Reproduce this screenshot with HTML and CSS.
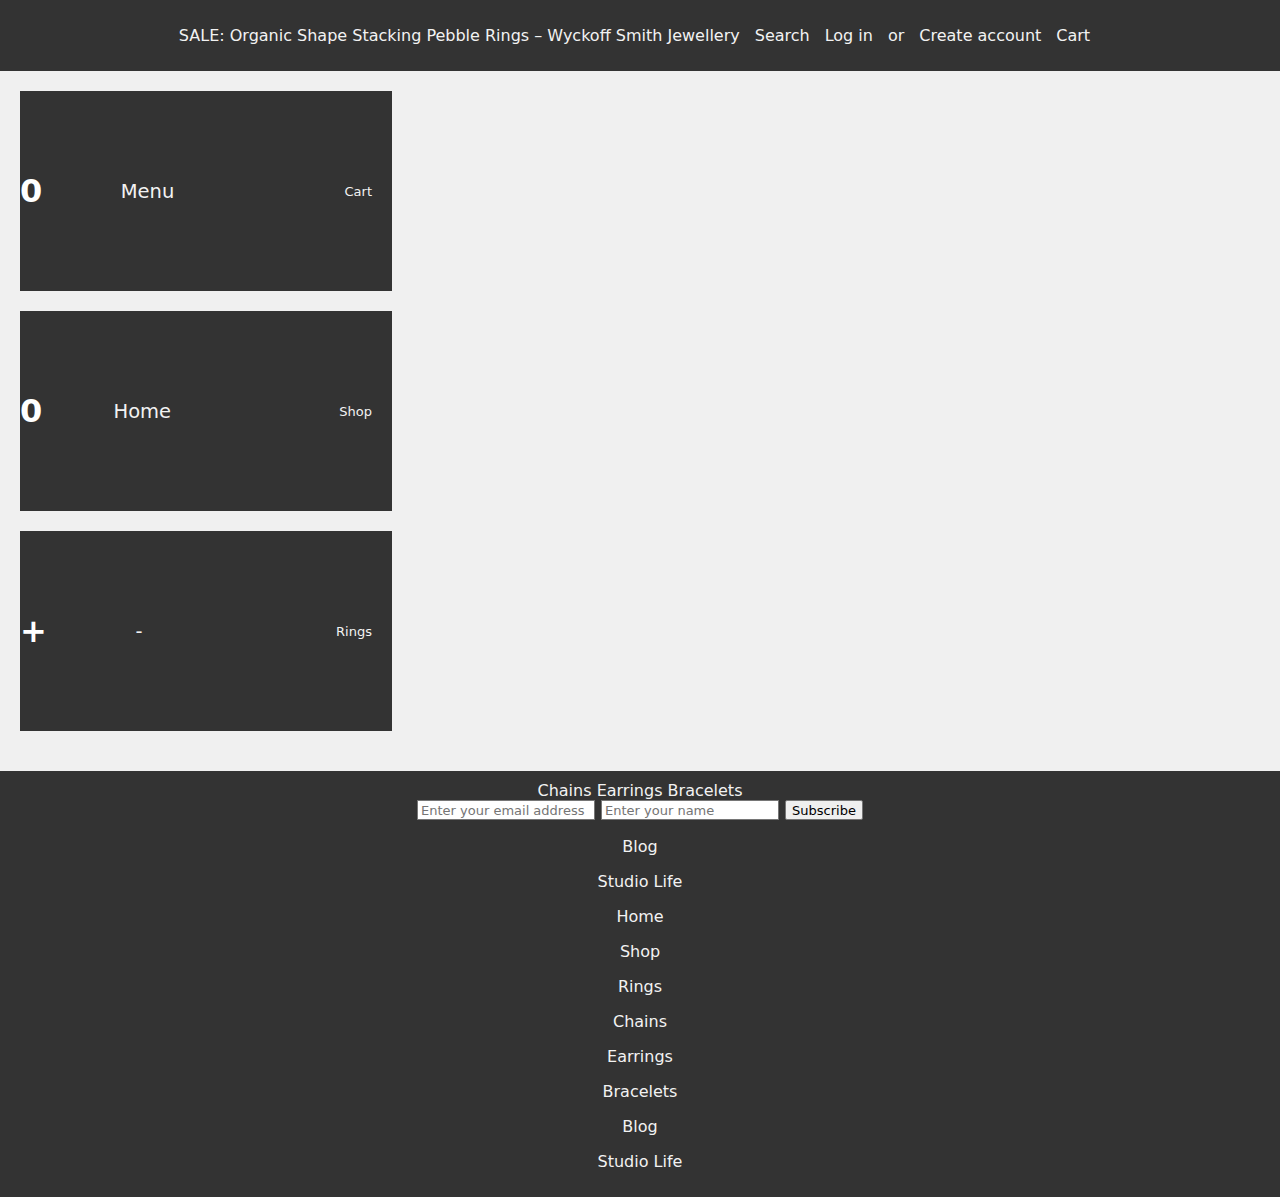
FILE: index.html
```html
<!DOCTYPE html>
<html lang="en">
<head>
<meta charset="utf-8">
<title>SALE: Organic Shape Stacking Pebble Rings – Wyckoff Smith Jewellery</title>
<link rel="stylesheet" href="styles.css">
</head>
<body>
<header class="topbar">
  <span class="topbar-title">SALE: Organic Shape Stacking Pebble Rings – Wyckoff Smith Jewellery</span>
  <a class="topbar-link" href="#">Search</a>
  <a class="topbar-link" href="#">Log in</a>
  <span class="topbar-link">or</span>
  <a class="topbar-link" href="#">Create account</a>
  <a class="topbar-link" href="#">Cart</a>
</header>
<main class="content">
  <div class="card">
    <span class="card-big">0</span>
    <span class="card-mid">Menu</span>
    <a class="card-small" href="#">Cart</a>
  </div>
  <div class="card">
    <span class="card-big">0</span>
    <span class="card-mid">Home</span>
    <a class="card-small" href="#">Shop</a>
  </div>
  <div class="card">
    <span class="card-big">+</span>
    <span class="card-mid">-</span>
    <a class="card-small" href="#">Rings</a>
  </div>
</main>
<footer class="footer">
  <div class="footer-title">Chains Earrings Bracelets</div>
  <form class="signup">
    <input class="field" type="email" placeholder="Enter your email address">
    <input class="field" type="text" placeholder="Enter your name">
    <button class="btn" type="button">Subscribe</button>
  </form>
  <ul class="footer-links">
    <li><a href="#">Blog</a></li>
    <li><a href="#">Studio Life</a></li>
    <li><a href="#">Home</a></li>
    <li><a href="#">Shop</a></li>
    <li><a href="#">Rings</a></li>
    <li><a href="#">Chains</a></li>
    <li><a href="#">Earrings</a></li>
    <li><a href="#">Bracelets</a></li>
    <li><a href="#">Blog</a></li>
    <li><a href="#">Studio Life</a></li>
  </ul>
</footer>
</body>
</html>
```

FILE: styles.css
```css
html, body {
  margin: 0;
  padding: 0;
}
body {
  background: #f0f0f0;
  font-family: "DejaVu Sans", sans-serif;
  color: #f2f2f2;
}
a {
  color: inherit;
  text-decoration: none;
}
.topbar {
  background: #333333;
  height: 71px;
  display: flex;
  align-items: center;
  justify-content: center;
  gap: 15px;
  padding-right: 11px;
  font-size: 16px;
  color: #f2f2f2;
  box-sizing: border-box;
}
.content {
  display: flex;
  flex-direction: column;
  gap: 20px;
  padding: 20px 20px 40px 20px;
}
.card {
  width: 372px;
  height: 200px;
  background: #333333;
  display: flex;
  align-items: center;
  padding-right: 20px;
  box-sizing: border-box;
}
.card-big {
  flex: 1;
  font-size: 32px;
  font-weight: bold;
  color: #ffffff;
}
.card-mid {
  width: 160px;
  margin-right: 117px;
  text-align: center;
  font-size: 19.5px;
  color: #f2f2f2;
}
.card-small {
  font-size: 13px;
  color: #f2f2f2;
}
.footer {
  background: #333333;
  padding: 10px 0 18px;
  text-align: center;
  font-size: 16px;
  color: #f2f2f2;
  min-height: 426px;
  box-sizing: border-box;
}
.footer-title {
  line-height: 19px;
}
.signup {
  display: flex;
  justify-content: center;
  align-items: center;
  gap: 6px;
  margin: 0;
}
.field {
  width: 178px;
  height: 20px;
  box-sizing: border-box;
  border: 1px solid #767676;
  background: #ffffff;
  padding: 1px 3px;
  font-family: "DejaVu Sans", sans-serif;
  font-size: 13px;
  color: #222;
  margin: 0;
}
.field::placeholder {
  color: #757575;
}
.btn {
  width: 78px;
  height: 20px;
  box-sizing: border-box;
  border: 1px solid #767676;
  border-radius: 2px;
  background: #efefef;
  font-family: "DejaVu Sans", sans-serif;
  font-size: 13px;
  color: #000;
  padding: 0;
  margin: 0;
}
.footer-links {
  list-style: none;
  margin: 9px 0 0;
  padding: 0;
}
.footer-links li {
  padding: 8px 0;
  line-height: 19px;
}
```
